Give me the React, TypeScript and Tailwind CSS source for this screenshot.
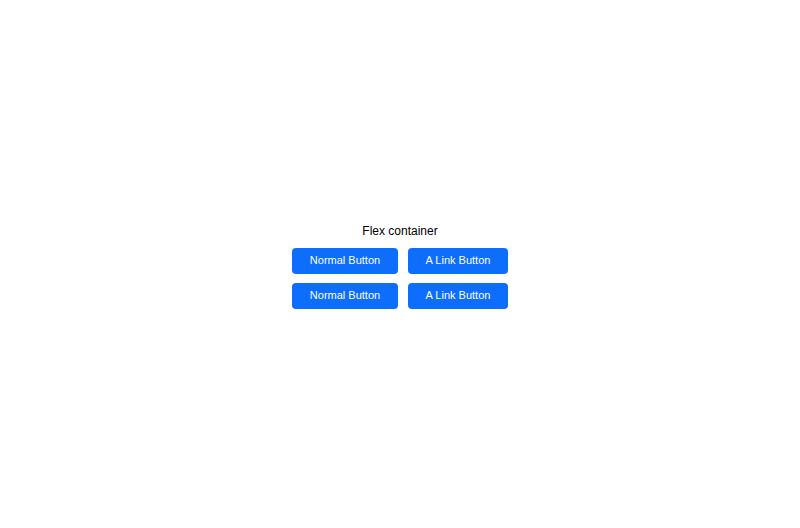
export default function App() {
  return (
    <div className="font-['Liberation_Sans',Arial,sans-serif]">
      <div className="flex min-h-screen w-full flex-col items-center justify-center">
        <h2 className="mb-[6px] text-[12px] leading-[22px] text-black">Flex container</h2>
        <div className="grid grid-cols-[106px_100px] gap-x-[10px] gap-y-[9px]">
          <button className="h-[26px] rounded-[4px] bg-[#0d6efd] text-[11px] text-white">Normal Button</button>
          <a href="#" className="flex h-[26px] items-center justify-center rounded-[4px] bg-[#0d6efd] text-[11px] text-white">
            A Link Button
          </a>
          <button className="h-[26px] rounded-[4px] bg-[#0d6efd] text-[11px] text-white">Normal Button</button>
          <a href="#" className="flex h-[26px] items-center justify-center rounded-[4px] bg-[#0d6efd] text-[11px] text-white">
            A Link Button
          </a>
        </div>
      </div>
      <div className="h-[540px]" />
    </div>
  )
}
